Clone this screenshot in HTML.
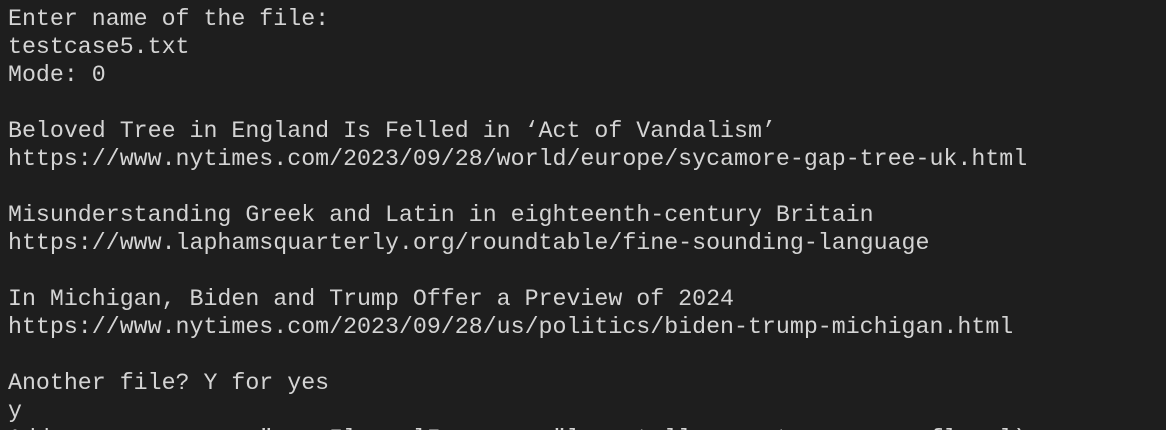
<!DOCTYPE html>
<html><head><meta charset="utf-8"><style>
html,body{margin:0;padding:0;background:#1e1e1e;width:1166px;height:430px;overflow:hidden}
pre{margin:0;padding:5px 0 0 8px;height:425px;overflow:hidden;font-family:"Liberation Mono",monospace;font-size:23.27px;line-height:28px;color:#d4d4d4;white-space:pre}
</style></head><body><pre>Enter name of the file:
testcase5.txt
Mode: 0

Beloved Tree in England Is Felled in ‘Act of Vandalism’
https://www.nytimes.com/2023/09/28/world/europe/sycamore-gap-tree-uk.html

Misunderstanding Greek and Latin in eighteenth-century Britain
https://www.laphamsquarterly.org/roundtable/fine-sounding-language

In Michigan, Biden and Trump Offer a Preview of 2024
https://www.nytimes.com/2023/09/28/us/politics/biden-trump-michigan.html

Another file? Y for yes
y
Add               "    Il    lI        "l    t ll      t      ,   fl   l)</pre></body></html>
